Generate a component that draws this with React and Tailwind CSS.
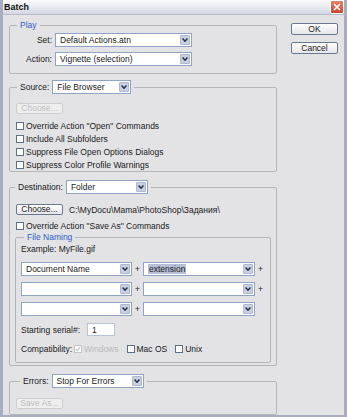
import React from "react";

const Chevron = () => (
  <svg width="6" height="4" viewBox="0 0 6 4">
    <path d="M0.6 0.6 L3 3.2 L5.4 0.6" stroke="#27303f" strokeWidth="1.5" fill="none" />
  </svg>
);

function Select({ className = "", text = "", hl = false }) {
  return (
    <div className={`flex items-stretch bg-white border border-[#8fa3c4] p-px h-[14px] ${className}`}>
      <div className="flex-1 flex items-center pl-[3px] overflow-hidden whitespace-nowrap">
        {hl ? <span className="bg-[#b7bfd6] px-px">{text}</span> : text}
      </div>
      <div className="w-[10px] bg-[#c7cfe3] border border-[#aeb8d0] rounded-[1px] flex items-center justify-center">
        <Chevron />
      </div>
    </div>
  );
}

function Check({ label, disabled = false, checked = false }) {
  return (
    <div className="flex items-center h-[13px] gap-[2px]">
      <div
        className={`w-[8px] h-[8px] border bg-white flex items-center justify-center ${
          disabled ? "border-[#c4c4c4]" : "border-[#5f6f86]"
        }`}
      >
        {checked && (
          <svg width="6" height="6" viewBox="0 0 6 6">
            <path d="M0.8 3 L2.4 4.6 L5.2 1.2" stroke="#c0c0c0" strokeWidth="1.2" fill="none" />
          </svg>
        )}
      </div>
      <span className={disabled ? "text-[#b9b9b9]" : ""}>{label}</span>
    </div>
  );
}

function Btn({ label, disabled = false, className = "" }) {
  return (
    <div
      className={`flex items-center justify-center h-[11px] w-[47px] rounded-[2px] border leading-none ${
        disabled
          ? "border-[#cdcdcd] bg-[#eeeeee] text-[#bdbdbd]"
          : "border-[#6b7894] bg-gradient-to-b from-[#ffffff] to-[#e6e6ea] text-[#1a1a1a]"
      } ${className}`}
    >
      {label}
    </div>
  );
}

const Plus = () => <span className="w-[5px] text-center leading-none">+</span>;

export default function App() {
  return (
    <div className="w-[347px] h-[417px] flex flex-col font-['Liberation_Sans',Arial,sans-serif] text-[8.5px] leading-[10px] text-[#1a1a1a] overflow-hidden">
      {/* Title bar */}
      <div className="h-[18px] flex items-center bg-gradient-to-b from-[#fafafc] via-[#e9eaf0] to-[#d3d6e2] border-b border-[#b9bdcb] border-l-[3px] border-r-[3px] border-l-[#a9adc1] border-r-[#a9adc1]">
        <span className="pl-[1px] font-bold text-[9px] text-[#111]">Batch</span>
        <div className="ml-auto mr-[0px] w-[14px] h-[14px] rounded-[2px] border border-white bg-gradient-to-b from-[#e6806a] to-[#c8442a] flex items-center justify-center">
          <svg width="8" height="8" viewBox="0 0 8 8">
            <path d="M1 1 L7 7 M7 1 L1 7" stroke="#fff" strokeWidth="1.6" />
          </svg>
        </div>
      </div>

      {/* Body */}
      <div className="flex-1 flex bg-[#e3e3e6] border-l-[3px] border-r-[3px] border-b-[4px] border-[#a9adc1] pl-[6px]">
        {/* Left column */}
        <div className="w-[268px] flex flex-col pt-[5px]">
          {/* Play */}
          <fieldset className="border border-[#b5b5b8] rounded-[2px]">
            <legend className="ml-[7px] px-[3px] text-[#2d5fc4] leading-[10px]">Play</legend>
            <div className="grid grid-cols-[42px_137px] gap-x-[3px] gap-y-[5px] items-center mt-[3px] pb-[7px]">
              <span className="text-right">Set:</span>
              <Select className="w-[137px]" text="Default Actions.atn" />
              <span className="text-right">Action:</span>
              <Select className="w-[137px]" text="Vignette (selection)" />
            </div>
          </fieldset>

          {/* Source */}
          <fieldset className="mt-[6px] border border-[#b5b5b8] rounded-[2px]">
            <legend className="ml-[7px] px-[3px]">
              <div className="flex items-center gap-[3px]">
                <span>Source:</span>
                <Select className="w-[79px]" text="File Browser" />
              </div>
            </legend>
            <div className="pl-[6px] mt-[9px] flex flex-col">
              <Btn label="Choose..." disabled />
              <div className="mt-[5px] flex flex-col">
                <Check label={'Override Action "Open" Commands'} />
                <Check label="Include All Subfolders" />
                <Check label="Suppress File Open Options Dialogs" />
                <Check label="Suppress Color Profile Warnings" />
              </div>
            </div>
          </fieldset>

          {/* Destination */}
          <fieldset className="mt-[8px] border border-[#b5b5b8] rounded-[2px]">
            <legend className="ml-[5px] px-[3px]">
              <div className="flex items-center gap-[3px]">
                <span>Destination:</span>
                <Select className="w-[82px]" text="Folder" />
              </div>
            </legend>
            <div className="pl-[6px] mt-[10px] flex items-center gap-[6px]">
              <Btn label="Choose..." />
              <span>C:\MyDocu\Mama\PhotoShop\Задания\</span>
            </div>
            <div className="pl-[6px] mt-[4px]">
              <Check label={'Override Action "Save As" Commands'} />
            </div>
            <div className="px-[5px] pb-[2px]">
              <fieldset className="border border-[#b5b5b8] rounded-[2px]">
                <legend className="ml-[8px] px-[3px] text-[#2d5fc4] leading-[10px]">File Naming</legend>
                <div className="pl-[5px] flex flex-col">
                  <div className="mt-[2px] h-[10px]">Example: MyFile.gif</div>
                  <div className="mt-[8px] flex flex-col gap-[6px]">
                    <div className="flex items-center gap-[3px]">
                      <Select className="w-[111px]" text="Document Name" />
                      <Plus />
                      <Select className="w-[112px]" text="extension" hl />
                      <Plus />
                    </div>
                    <div className="flex items-center gap-[3px]">
                      <Select className="w-[111px]" />
                      <Plus />
                      <Select className="w-[112px]" />
                      <Plus />
                    </div>
                    <div className="flex items-center gap-[3px]">
                      <Select className="w-[111px]" />
                      <Plus />
                      <Select className="w-[112px]" />
                    </div>
                  </div>
                  <div className="mt-[7px] flex items-center gap-[7px]">
                    <span>Starting serial#:</span>
                    <div className="w-[28px] h-[13px] bg-white border border-[#b9c3d6] flex items-center pl-[4px]">1</div>
                  </div>
                  <div className="mt-[6px] mb-[7px] flex items-center">
                    <span className="mr-[2px]">Compatibility:</span>
                    <Check label="Windows" disabled checked />
                    <div className="w-[8px]" />
                    <Check label="Mac OS" />
                    <div className="w-[8px]" />
                    <Check label="Unix" />
                  </div>
                </div>
              </fieldset>
            </div>
          </fieldset>

          {/* Errors */}
          <fieldset className="mt-[8px] border border-[#b5b5b8] rounded-[2px]">
            <legend className="ml-[10px] px-[3px]">
              <div className="flex items-center gap-[3px]">
                <span>Errors:</span>
                <Select className="w-[92px]" text="Stop For Errors" />
              </div>
            </legend>
            <div className="pl-[6px] mt-[10px] pb-[5px]">
              <Btn label="Save As..." disabled />
            </div>
          </fieldset>
        </div>

        {/* Right column */}
        <div className="ml-[14px] pt-[8px] flex flex-col gap-[7px]">
          <Btn label="OK" className="h-[12px] border-[#3d5a8c]" />
          <Btn label="Cancel" className="h-[12px] border-[#3d5a8c]" />
        </div>
      </div>
    </div>
  );
}
